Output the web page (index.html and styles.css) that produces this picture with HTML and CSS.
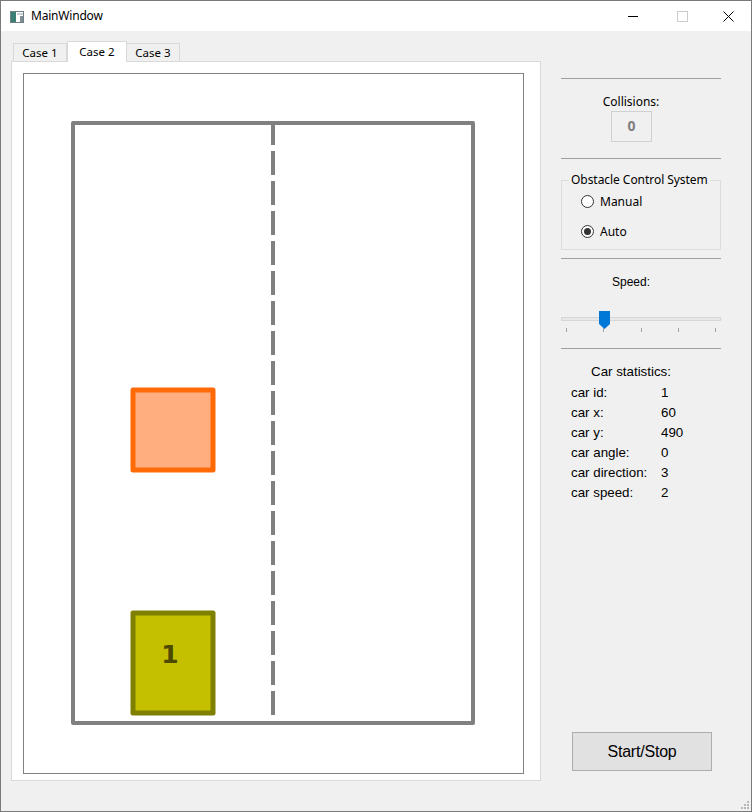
FILE: index.html
```html
<!DOCTYPE html>
<html>
<head>
<meta charset="utf-8">
<link rel="stylesheet" href="styles.css">
</head>
<body>
<div class="window">
  <div class="titlebar">
    <svg class="app-icon" width="14" height="12" viewBox="0 0 14 12">
      <rect x="0.5" y="0.5" width="13" height="11" fill="#ffffff" stroke="#6f7f86"/>
      <rect x="1" y="1" width="5" height="10" fill="#3b7f74"/>
      <rect x="7" y="2" width="6" height="2" fill="#c8d0d4"/>
      <rect x="10" y="5" width="3" height="6" fill="#7f8e96"/>
    </svg>
    <span class="title">MainWindow</span>
    <div class="caption-buttons">
      <span class="cap cap-min"><svg width="11" height="11" viewBox="0 0 11 11"><line x1="0" y1="5.5" x2="10" y2="5.5" stroke="#000" stroke-width="1"/></svg></span>
      <span class="cap cap-max"><svg width="11" height="11" viewBox="0 0 11 11"><rect x="0.5" y="0.5" width="10" height="10" fill="none" stroke="#cccccc"/></svg></span>
      <span class="cap cap-close"><svg width="11" height="11" viewBox="0 0 11 11"><path d="M0.5 0.5 L10.5 10.5 M10.5 0.5 L0.5 10.5" stroke="#000" stroke-width="1"/></svg></span>
    </div>
  </div>
  <div class="client">
    <div class="tabs">
      <div class="tabbar">
        <div class="tab">Case 1</div>
        <div class="tab tab-active">Case 2</div>
        <div class="tab tab-last">Case 3</div>
      </div>
      <div class="pane">
        <div class="view">
          <svg class="scene" width="499" height="699" viewBox="0 0 499 699">
            <g transform="translate(49,49)">
              <rect x="0" y="0" width="400" height="600" fill="none" stroke="#808080" stroke-width="4" stroke-linejoin="round"/>
              <line x1="200" y1="-2" x2="200" y2="600" stroke="#808080" stroke-width="4" stroke-dasharray="24 6"/>
              <rect x="60" y="267" width="80" height="80" fill="#ffaf7f" stroke="#ff6a06" stroke-width="5" stroke-linejoin="round"/>
              <rect x="60" y="490" width="80" height="100" fill="#c4c000" stroke="#808000" stroke-width="5" stroke-linejoin="round"/>
              <text x="97" y="540" text-anchor="middle" class="car-label">1</text>
            </g>
          </svg>
        </div>
      </div>
    </div>
    <div class="panel">
      <div class="hr hr-first"></div>
      <div class="label-seg center collisions-label">Collisions:</div>
      <div class="counter">0</div>
      <div class="hr hr-2"></div>
      <fieldset class="group">
        <legend>Obstacle Control System</legend>
        <div class="radio radio-first"><span class="radio-dot"></span>Manual</div>
        <div class="radio"><span class="radio-dot radio-checked"></span>Auto</div>
      </fieldset>
      <div class="hr hr-3"></div>
      <div class="label-arial center speed-label">Speed:</div>
      <div class="slider">
        <div class="groove"></div>
        <svg class="handle" width="11" height="18" viewBox="0 0 11 18"><path d="M0 0 H11 V13 L5.5 18 L0 13 Z" fill="#0078d7"/></svg>
        <div class="ticks">
          <span class="tick"></span><span class="tick"></span><span class="tick"></span><span class="tick"></span><span class="tick"></span>
        </div>
      </div>
      <div class="hr hr-4"></div>
      <div class="label-arial center stats-title">Car statistics:</div>
      <div class="stats">
        <div class="row"><span class="k">car id:</span><span class="v">1</span></div>
        <div class="row"><span class="k">car x:</span><span class="v">60</span></div>
        <div class="row"><span class="k">car y:</span><span class="v">490</span></div>
        <div class="row"><span class="k">car angle:</span><span class="v">0</span></div>
        <div class="row"><span class="k">car direction:</span><span class="v">3</span></div>
        <div class="row"><span class="k">car speed:</span><span class="v">2</span></div>
      </div>
      <button class="btn">Start/Stop</button>
    </div>
  </div>
  <svg class="grip" width="8" height="8" viewBox="0 0 8 8">
    <rect x="6" y="0" width="2" height="2" fill="#b8b8b8"/>
    <rect x="3" y="3" width="2" height="2" fill="#b8b8b8"/>
    <rect x="6" y="3" width="2" height="2" fill="#b8b8b8"/>
    <rect x="0" y="6" width="2" height="2" fill="#b8b8b8"/>
    <rect x="3" y="6" width="2" height="2" fill="#b8b8b8"/>
    <rect x="6" y="6" width="2" height="2" fill="#b8b8b8"/>
  </svg>
</div>
</body>
</html>
```

FILE: styles.css
```css
* { box-sizing: border-box; }
html, body { margin: 0; padding: 0; background: #ffffff; }
body { font-family: "Noto Sans", "Open Sans", sans-serif; font-size: 12px; color: #000; }

.window {
  position: relative;
  width: 752px;
  height: 812px;
  border: 1px solid #7a7a7a;
  background: #f0f0f0;
  display: flex;
  flex-direction: column;
}

.titlebar {
  height: 30px;
  background: #ffffff;
  display: flex;
  align-items: center;
  flex-shrink: 0;
}
.app-icon { margin-left: 9px; margin-top: 1px; }
.title { margin-left: 7px; font-size: 12px; line-height: 16px; letter-spacing: -0.2px; }
.caption-buttons { margin-left: auto; display: flex; height: 30px; }
.cap { width: 46px; height: 30px; display: flex; align-items: center; justify-content: center; }
.cap svg { display: block; }
.cap-min { margin-right: 3px; }

.client {
  flex: 1;
  display: flex;
  padding: 10px 0 30px 10px;
}

.tabs { display: flex; flex-direction: column; width: 530px; }
.tabbar { display: flex; align-items: flex-end; height: 20px; padding-left: 2px; }
.tab {
  width: 54px;
  height: 18px;
  border: 1px solid #d9d9d9;
  border-bottom: none;
  background: #f0f0f0;
  text-align: center;
  line-height: 17px;
  font-size: 11.5px;
}
.tab-active {
  position: relative;
  z-index: 1;
  width: 60px;
  height: 21px;
  margin-bottom: -1px;
  background: #ffffff;
  line-height: 19px;
}
.tab-last { margin-left: -1px; }
.pane {
  flex: 1;
  border: 1px solid #d9d9d9;
  background: #ffffff;
  padding: 11px 16px 6px 11px;
}
.view {
  width: 501px;
  height: 701px;
  border: 1px solid #828282;
  background: #ffffff;
}
.scene { display: block; }
.car-label { font-family: "DejaVu Sans", sans-serif; font-weight: bold; font-size: 25px; fill: #4d4a00; }

.panel {
  width: 160px;
  margin-left: 20px;
  display: flex;
  flex-direction: column;
}
.hr { height: 1px; background: #a0a0a0; flex-shrink: 0; }
.hr-first { margin-top: 37px; }
.center { text-align: center; margin-right: 20px; }
.label-seg { font-size: 12px; line-height: 16px; }
.label-arial { font-family: "Liberation Sans", Arial, sans-serif; font-size: 12px; line-height: 16px; }
.collisions-label { margin-top: 15px; }
.counter {
  margin: 1px 0 0 50px;
  width: 41px;
  height: 31px;
  border: 1px solid #d0d0d0;
  background: #f0f0f0;
  color: #7f7f7f;
  font-weight: bold;
  font-size: 14px;
  line-height: 28px;
  text-align: center;
}
.hr-2 { margin-top: 16px; }

.group {
  margin: 13px 0 0 0;
  padding: 0 0 7px 0;
  border: 1px solid #dcdcdc;
  height: 78px;
  min-width: 0;
}
.group legend {
  padding: 0 2px;
  margin-left: 7px;
  font-size: 12px;
  line-height: 16px;
  letter-spacing: -0.05px;
  white-space: nowrap;
}
.radio { display: flex; align-items: center; height: 20px; font-size: 12px; margin-left: 19px; }
.radio-first { margin-top: 3px; margin-bottom: 10px; }
.radio-dot {
  width: 13px;
  height: 13px;
  border: 1px solid #333333;
  border-radius: 50%;
  background: #ffffff;
  margin-right: 6px;
  display: flex;
  align-items: center;
  justify-content: center;
}
.radio-checked::after {
  content: "";
  width: 7px;
  height: 7px;
  border-radius: 50%;
  background: #333333;
}
.hr-3 { margin-top: 8px; }
.speed-label { margin-top: 15px; }

.slider { position: relative; height: 24px; margin-top: 19px; }
.groove {
  position: absolute;
  left: 0; right: 0;
  top: 8px;
  height: 4px;
  background: #e7e7e7;
  border: 1px solid #d6d6d6;
}
.handle { position: absolute; left: 38px; top: 2px; }
.ticks {
  position: absolute;
  left: 5px; right: 5px;
  top: 19px;
  display: flex;
  justify-content: space-between;
}
.tick { width: 1px; height: 4px; background: #a0a0a0; }

.hr-4 { margin-top: 15px; }
.stats-title { margin-top: 15px; font-size: 13.33px; }
.stats { margin-top: 2px; padding-left: 10px; font-family: "Liberation Sans", Arial, sans-serif; font-size: 13.33px; }
.row { display: flex; height: 20px; align-items: center; }
.k { width: 90px; }

.btn {
  margin: auto 0 10px 11px;
  width: 140px;
  height: 39px;
  border: 1px solid #adadad;
  background: #e1e1e1;
  font-family: "Liberation Sans", Arial, sans-serif;
  font-size: 16px;
  letter-spacing: -0.2px;
  color: #000;
  padding: 0;
}

.grip { position: absolute; right: 2px; bottom: 2px; }
```
